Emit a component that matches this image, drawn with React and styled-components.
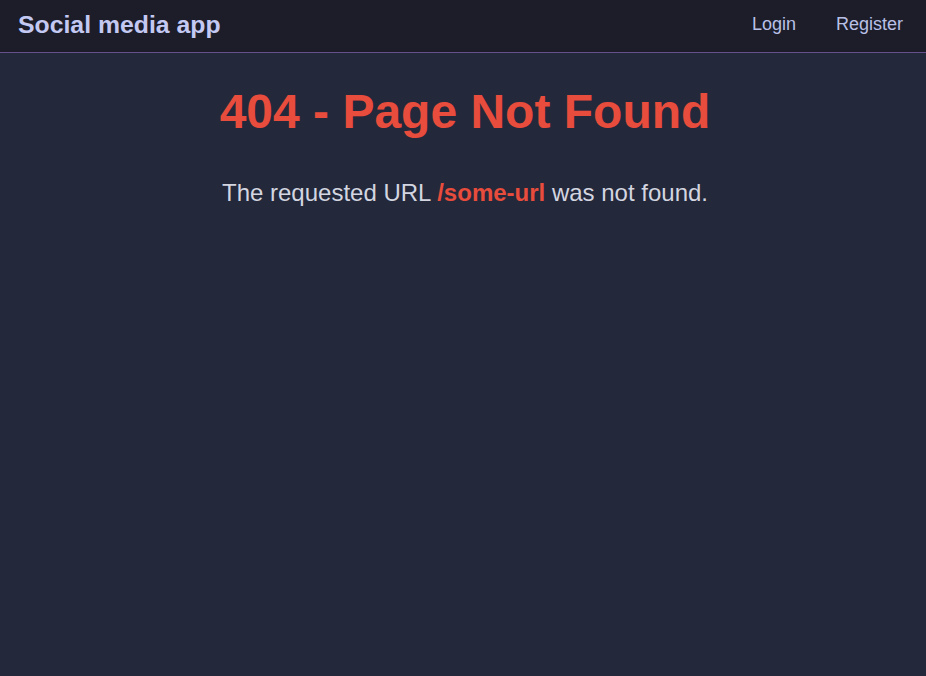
import React from "react";
import styled, { createGlobalStyle } from "styled-components";

const Global = createGlobalStyle`
  html, body {
    margin: 0;
    padding: 0;
    background: #23283a;
    font-family: "Liberation Sans", Arial, sans-serif;
  }
  #root {
    min-height: 100vh;
    background: #23283a;
  }
`;

const Page = styled.div`
  min-height: 100vh;
  display: flex;
  flex-direction: column;
  background: #23283a;
`;

const Header = styled.header`
  height: 53px;
  box-sizing: border-box;
  display: flex;
  align-items: center;
  justify-content: space-between;
  padding: 0 23px 0 18px;
  background: #1c1d29;
  border-bottom: 1px solid #67518a;
`;

const Brand = styled.a`
  font-size: 24.8px;
  font-weight: 700;
  color: #c3c9f2;
  text-decoration: none;
  line-height: 1;
  margin-top: -1px;
`;

const Nav = styled.nav`
  display: flex;
  gap: 40px;
  align-items: center;
  margin-top: -3px;
`;

const NavLink = styled.a`
  font-size: 18px;
  color: #b9c0e6;
  text-decoration: none;
`;

const Main = styled.main`
  display: flex;
  flex-direction: column;
  align-items: center;
  padding: 33px 0 0 4px;
`;

const Title = styled.h1`
  margin: 0;
  font-size: 48px;
  font-weight: 700;
  line-height: 1.1;
  color: #e74c3c;
`;

const Message = styled.p`
  margin: 40px 0 0;
  font-size: 24px;
  color: #d3d6e0;
`;

const Url = styled.span`
  color: #e74c3c;
  font-weight: 700;
`;

export default function App() {
  return (
    <Page>
      <Global />
      <Header>
        <Brand href="#">Social media app</Brand>
        <Nav>
          <NavLink href="#">Login</NavLink>
          <NavLink href="#">Register</NavLink>
        </Nav>
      </Header>
      <Main>
        <Title>404 - Page Not Found</Title>
        <Message>
          The requested URL <Url>/some-url</Url> was not found.
        </Message>
      </Main>
    </Page>
  );
}
